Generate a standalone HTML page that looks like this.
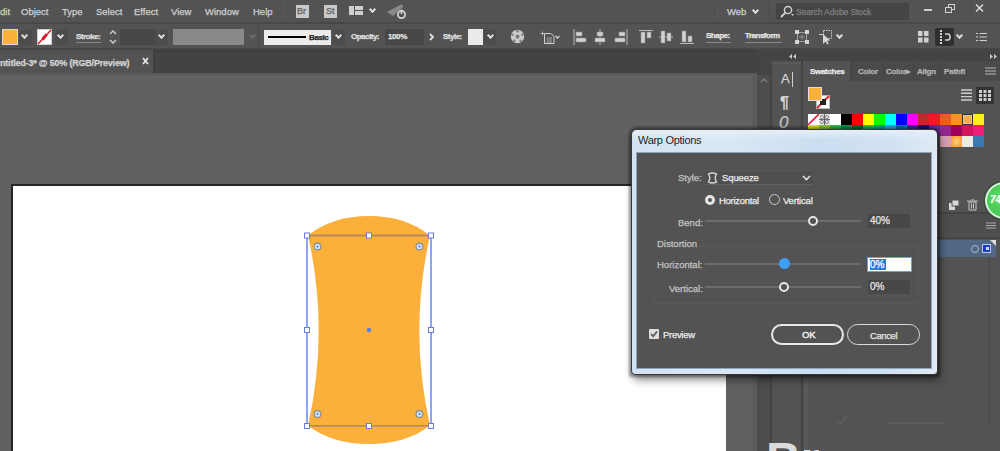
<!DOCTYPE html>
<html><head><meta charset="utf-8">
<style>
*{margin:0;padding:0;box-sizing:border-box}
html,body{width:1000px;height:451px;overflow:hidden;background:#636363;font-family:"Liberation Sans",sans-serif;position:relative}
.a{position:absolute}
.t{position:absolute;white-space:nowrap;line-height:1;-webkit-text-stroke:0.25px currentColor;}
.mt{color:#d0d0d0;font-size:9.5px;top:7px;}
.ct{color:#e0e0e0;font-size:8px;font-weight:bold;letter-spacing:-0.5px;}
.dl{font-size:9.5px;color:#c4c4c4;}
.chev{position:absolute;width:5px;height:5px;border-right:2px solid #dcdcdc;border-bottom:2px solid #dcdcdc;transform:rotate(45deg);}
</style></head><body>
<!-- bars -->
<div class="a" style="left:0;top:0;width:1000px;height:22px;background:#535353"></div>
<div class="a" style="left:0;top:22px;width:1000px;height:2px;background:#484848"></div>
<div class="a" style="left:0;top:24px;width:1000px;height:24px;background:#535353"></div>
<div class="a" style="left:0;top:48px;width:1000px;height:2px;background:#474747"></div>
<div class="a" style="left:0;top:50px;width:1000px;height:23px;background:#434343"></div>
<div class="a" style="left:154px;top:50px;width:846px;height:2px;background:#3e3e3e"></div>
<div class="a" style="left:0;top:50px;width:154px;height:23px;background:#535353"></div>
<div class="a" style="left:153px;top:50px;width:2px;height:23px;background:#3f3f3f"></div>
<div class="a" style="left:0;top:73px;width:757px;height:2px;background:#595959"></div>
<!-- canvas -->
<div class="a" style="left:0;top:75px;width:757px;height:376px;background:#616161"></div>
<div class="a" style="left:11px;top:184px;width:715px;height:267px;background:#fff;border-left:2px solid #262626;border-top:2px solid #262626"></div>


<!-- artwork -->
<svg class="a" style="left:0;top:0" width="757" height="451" viewBox="0 0 757 451">
<path d="M308 235.5 C325 222 345 216 369 216 C393 216 413 222 430 235.5 Q408.6 330.5 430 425.5 C413 438.5 393 444 369 444 C345 444 325 438.5 308 425.5 Q329.4 330.5 308 235.5 Z" fill="#fbb03b"/>
<path d="M307 233 V428 M431 233 V428" stroke="#5b7ff0" stroke-width="1.4"/><path d="M307 235.5 H431 M307 425.8 H431" stroke="#b98a5e" stroke-width="1.8"/>
<g fill="#fff" stroke="#6a7fd0" stroke-width="1">
<rect x="304.5" y="233" width="5" height="5"/><rect x="366.5" y="233" width="5" height="5"/><rect x="428.5" y="233" width="5" height="5"/>
<rect x="304.5" y="327.5" width="5" height="5"/><rect x="428.5" y="327.5" width="5" height="5"/>
<rect x="304.5" y="423.5" width="5" height="5"/><rect x="366.5" y="423.5" width="5" height="5"/><rect x="428.5" y="423.5" width="5" height="5"/>
</g>
<g fill="#d4e4f4" stroke="#808898" stroke-width="1.1">
<circle cx="317.5" cy="246.5" r="3.4"/><circle cx="419.5" cy="246.5" r="3.4"/><circle cx="317.5" cy="414" r="3.4"/><circle cx="419.5" cy="414" r="3.4"/>
</g>
<g fill="#4a80e0"><circle cx="317.5" cy="246.5" r="1.1"/><circle cx="419.5" cy="246.5" r="1.1"/><circle cx="317.5" cy="414" r="1.1"/><circle cx="419.5" cy="414" r="1.1"/></g>
<circle cx="369" cy="330" r="2.2" fill="#5b7fe0"/>
</svg>


<!-- right side -->
<div class="a" style="left:757px;top:50px;width:243px;height:401px;background:#444"></div>
<div class="a" style="left:757px;top:75px;width:13px;height:376px;background:#4d4d4d"></div>
<div class="a" style="left:752px;top:75px;width:5px;height:376px;background:#5c5c5c"></div>
<svg class="a" style="left:759px;top:76px" width="10" height="8"><path d="M2 6 L5 3 L8 6" fill="none" stroke="#7a7a7a" stroke-width="1.5"/></svg>
<div class="a" style="left:772px;top:61px;width:29px;height:390px;background:#535353"></div>
<div class="a" style="left:771px;top:63px;width:30px;height:1px;background:#5e5e5e"></div>
<span class="t" style="left:781px;top:72px;font-size:13px;color:#d4d4d4">A</span>
<div class="a" style="left:792px;top:72px;width:1px;height:15px;background:#cfcfcf"></div>
<span class="t" style="left:780px;top:95px;font-size:16px;color:#d4d4d4;font-weight:bold">&#182;</span>
<span class="t" style="left:779px;top:114px;font-size:17px;color:#c4c4c4;font-style:italic">0</span>
<svg class="a" style="left:789px;top:54px" width="8" height="5"><path d="M3 0 L0 2.5 L3 5 Z M7 0 L4 2.5 L7 5 Z" fill="#c8c8c8"/></svg>
<svg class="a" style="left:989px;top:54px" width="8" height="5"><path d="M1 0 L4 2.5 L1 5 Z M5 0 L8 2.5 L5 5 Z" fill="#c8c8c8"/></svg>
<div class="a" style="left:803px;top:61px;width:197px;height:390px;background:#535353"></div>
<div class="a" style="left:804px;top:300px;width:4px;height:151px;background:#595959"></div>
<div class="a" style="left:850px;top:61px;width:150px;height:20px;background:#4a4a4a"></div>
<div class="a" style="left:804px;top:61px;width:46px;height:20px;background:#535353"></div>
<div class="a" style="left:851px;top:63px;width:1px;height:16px;background:#424242"></div>
<div class="a" style="left:883px;top:63px;width:1px;height:16px;background:#424242"></div>
<div class="a" style="left:913px;top:63px;width:1px;height:16px;background:#424242"></div>
<div class="a" style="left:940px;top:63px;width:1px;height:16px;background:#424242"></div>
<span class="t" style="left:810px;top:68px;font-size:8px;color:#ececec;font-weight:bold;letter-spacing:-0.3px">Swatches</span>
<span class="t" style="left:858px;top:68px;font-size:8px;color:#b4b4b4;font-weight:bold;letter-spacing:-0.2px">Color</span>
<span class="t" style="left:886px;top:68px;font-size:8px;color:#b4b4b4;font-weight:bold;letter-spacing:-0.2px">Color&#9656;</span>
<span class="t" style="left:917px;top:68px;font-size:8px;color:#b4b4b4;font-weight:bold;letter-spacing:-0.2px">Align</span>
<span class="t" style="left:944px;top:68px;font-size:8px;color:#b4b4b4;font-weight:bold;letter-spacing:-0.2px">Pathfi</span>
<svg class="a" style="left:985px;top:67px" width="11" height="8"><path d="M0 1 H11 M0 4 H11 M0 7 H11" stroke="#b8b8b8" stroke-width="1.2"/></svg>
<!-- fill/stroke -->
<div class="a" style="left:816px;top:95px;width:14px;height:14px;background:#fff;border:1px solid #bbb"></div>
<svg class="a" style="left:816px;top:95px" width="14" height="14"><path d="M1 13 L13 1" stroke="#e0242c" stroke-width="2"/><rect x="4" y="4" width="6" height="6" fill="#222"/></svg>
<div class="a" style="left:808px;top:87px;width:14px;height:14px;background:#fbb03b;border:1px solid #e0e0e0"></div>
<svg class="a" style="left:961px;top:89px" width="11" height="12"><path d="M0 1 H11 M0 4.3 H11 M0 7.6 H11 M0 11 H11" stroke="#cfcfcf" stroke-width="1.4"/></svg>
<div class="a" style="left:976px;top:87px;width:18px;height:17px;background:#333"></div>
<svg class="a" style="left:979px;top:90px" width="12" height="11"><g fill="#cfcfcf"><rect x="0" y="0" width="3" height="3"/><rect x="4.5" y="0" width="3" height="3"/><rect x="9" y="0" width="3" height="3"/><rect x="0" y="4" width="3" height="3"/><rect x="4.5" y="4" width="3" height="3"/><rect x="9" y="4" width="3" height="3"/><rect x="0" y="8" width="3" height="3"/><rect x="4.5" y="8" width="3" height="3"/><rect x="9" y="8" width="3" height="3"/></g></svg>
<!-- swatches row1 -->
<div class="a" style="left:808px;top:114px;width:11px;height:11px;background:#fff"></div>
<svg class="a" style="left:808px;top:114px" width="11" height="11"><path d="M0 11 L11 0" stroke="#e0242c" stroke-width="1.6"/></svg>
<div class="a" style="left:819px;top:114px;width:11px;height:11px;background:#e6e6e6"></div><svg class="a" style="left:819px;top:114px" width="11" height="11"><path d="M5.5 0 V11 M0 5.5 H11" stroke="#666" stroke-width="1"/><circle cx="3" cy="3" r="1.6" fill="none" stroke="#777" stroke-width="0.8"/><circle cx="8" cy="3" r="1.6" fill="none" stroke="#777" stroke-width="0.8"/><circle cx="3" cy="8" r="1.6" fill="none" stroke="#777" stroke-width="0.8"/><circle cx="8" cy="8" r="1.6" fill="none" stroke="#777" stroke-width="0.8"/></svg>
<div class="a" style="left:830px;top:114px;width:11px;height:11px;background:#fff"></div>
<div class="a" style="left:841px;top:114px;width:11px;height:11px;background:#000"></div>
<div class="a" style="left:852px;top:114px;width:11px;height:11px;background:#ff0000"></div>
<div class="a" style="left:863px;top:114px;width:11px;height:11px;background:#ffff00"></div>
<div class="a" style="left:874px;top:114px;width:11px;height:11px;background:#00ff00"></div>
<div class="a" style="left:885px;top:114px;width:11px;height:11px;background:#00ffff"></div>
<div class="a" style="left:896px;top:114px;width:11px;height:11px;background:#0000ff"></div>
<div class="a" style="left:907px;top:114px;width:11px;height:11px;background:#ff00ff"></div>
<div class="a" style="left:918px;top:114px;width:11px;height:11px;background:#c1272d"></div>
<div class="a" style="left:929px;top:114px;width:11px;height:11px;background:#ed1c24"></div>
<div class="a" style="left:940px;top:114px;width:11px;height:11px;background:#f15a24"></div>
<div class="a" style="left:951px;top:114px;width:11px;height:11px;background:#f7931e"></div>
<div class="a" style="left:962px;top:114px;width:11px;height:11px;background:#fbb03b;border:1.5px solid #333;box-shadow:0 0 0 1px #ccc inset"></div>
<div class="a" style="left:973px;top:114px;width:11px;height:11px;background:#fcee21"></div>
<div class="a" style="left:808px;top:125px;width:11px;height:11px;background:#d9e021"></div><div class="a" style="left:819px;top:125px;width:11px;height:11px;background:#8cc63f"></div><div class="a" style="left:830px;top:125px;width:11px;height:11px;background:#39b54a"></div><div class="a" style="left:841px;top:125px;width:11px;height:11px;background:#009245"></div><div class="a" style="left:852px;top:125px;width:11px;height:11px;background:#006837"></div><div class="a" style="left:863px;top:125px;width:11px;height:11px;background:#22b573"></div><div class="a" style="left:874px;top:125px;width:11px;height:11px;background:#00a99d"></div><div class="a" style="left:885px;top:125px;width:11px;height:11px;background:#29abe2"></div><div class="a" style="left:896px;top:125px;width:11px;height:11px;background:#0071bc"></div><div class="a" style="left:907px;top:125px;width:11px;height:11px;background:#2e3192"></div><div class="a" style="left:918px;top:125px;width:11px;height:11px;background:#1b1464"></div><div class="a" style="left:929px;top:125px;width:11px;height:11px;background:#662d91"></div>
<div class="a" style="left:940px;top:125px;width:11px;height:11px;background:#93278f"></div>
<div class="a" style="left:951px;top:125px;width:11px;height:11px;background:#9e005d"></div>
<div class="a" style="left:962px;top:125px;width:11px;height:11px;background:#d4145a"></div>
<div class="a" style="left:973px;top:125px;width:11px;height:11px;background:#ed1e79"></div>
<div class="a" style="left:940px;top:136px;width:11px;height:11px;background:#d9a0b0"></div>
<div class="a" style="left:951px;top:136px;width:11px;height:11px;background:radial-gradient(#ffd080,#f7931e)"></div>
<div class="a" style="left:962px;top:136px;width:11px;height:11px;background:#ecebe6"></div>
<div class="a" style="left:973px;top:136px;width:11px;height:11px;background:#3a7ab0"></div>
<!-- lower panel -->
<div class="a" style="left:803px;top:212px;width:197px;height:2px;background:#444"></div>
<div class="a" style="left:803px;top:214px;width:197px;height:23px;background:#4e4e4e"></div>
<svg class="a" style="left:949px;top:200px" width="10" height="10"><rect x="0" y="3" width="6" height="7" fill="#d8d8d8"/><rect x="3" y="0" width="7" height="6" fill="#d8d8d8" stroke="#535353"/></svg>
<svg class="a" style="left:967px;top:199px" width="11" height="12"><path d="M0 2 H11 M4 0 H7" stroke="#c8c8c8" stroke-width="1.2"/><path d="M2 3 H9 V11 H2 Z M4.5 4.5 V9.5 M6.5 4.5 V9.5" fill="none" stroke="#c8c8c8" stroke-width="1"/></svg>
<svg class="a" style="left:986px;top:222px" width="10" height="7"><path d="M0 1 H10 M0 3.5 H10 M0 6 H10" stroke="#aaa" stroke-width="1.1"/></svg>
<div class="a" style="left:803px;top:237px;width:197px;height:2px;background:#444"></div>
<div class="a" style="left:803px;top:240px;width:193px;height:17px;background:#526785"></div>
<div class="a" style="left:971px;top:245px;width:8px;height:8px;border:1.5px solid #a8b8cc;border-radius:50%"></div>
<div class="a" style="left:982px;top:244px;width:9px;height:9px;background:#1c3fbf;border:1px solid #c0c8e0"></div>
<div class="a" style="left:986px;top:247px;width:3px;height:3px;background:#cfd8ff"></div>
<svg class="a" style="left:990px;top:240px" width="6" height="6"><path d="M0 0 H6 V6 Z" fill="#ddd"/></svg>
<!-- green badge -->
<div class="a" style="left:985px;top:182px;width:38px;height:37px;border-radius:50%;background:radial-gradient(circle at 40% 40%,#5ad864,#3cc048);border:2px solid #d8f4dc;box-shadow:0 0 0 1.5px #3a4a3a"></div>
<span class="t" style="left:990px;top:195px;font-size:10px;color:#f4fff4;font-weight:bold;font-style:italic">74</span>
<!-- bottom watermark -->
<span class="t" style="left:766px;top:436px;font-size:48px;color:#dadada;font-weight:bold;-webkit-text-stroke:0">Br</span>
<div class="a" style="left:887px;top:422px;width:58px;height:2px;background:#5c5c5c"></div>
<div class="a" style="left:988px;top:258px;width:2px;height:165px;background:#4b4b4b"></div>
<svg class="a" style="left:836px;top:415px" width="12" height="10"><path d="M1 7 L4 9 L11 1" fill="none" stroke="#626262" stroke-width="1.3"/></svg>


<!-- dialog -->
<div class="a" style="left:629px;top:127px;width:311px;height:250px;border-radius:8px 8px 3px 3px;background:rgba(0,0,0,0.35);filter:blur(1px)"></div>
<div class="a" style="left:631px;top:129px;width:307px;height:246px;border-radius:6px 6px 4px 4px;box-shadow:2px 5px 9px rgba(0,0,0,0.45);background:linear-gradient(90deg,#d2e3f3 0%,#d9e8f5 30%,#cbdef1 60%,#d0e1f2 85%,#e0eaf5 100%);border:1px solid #3a3a3a"></div>
<div class="a" style="left:632px;top:130px;width:305px;height:10px;border-radius:5px 5px 0 0;background:linear-gradient(#e6eff8,rgba(230,239,248,0))"></div>
<div class="a" style="left:636px;top:152px;width:296px;height:217px;background:#535353;border:1px solid #8ea6c0"></div>
<span class="t" style="left:638px;top:135px;font-size:11px;color:#1e1e1e;letter-spacing:-0.3px;-webkit-text-stroke:0">Warp Options</span>
<span class="t dl" style="left:678px;top:173px">Style:</span>
<div class="a" style="left:705px;top:172px;width:107px;height:13px;background:#4f4f4f;border-top:1px solid #4a4a4a;border-bottom:1px solid #606060"></div>
<svg class="a" style="left:707px;top:172px" width="11" height="12" viewBox="0 0 11 12"><path d="M1.5 2 Q5.5 0 9.5 2 Q7 6 9.5 10 Q5.5 12 1.5 10 Q4 6 1.5 2 Z" fill="none" stroke="#d4d4d4" stroke-width="1.4"/></svg>
<span class="t" style="left:722px;top:173px;font-size:9.5px;color:#ececec;letter-spacing:-0.1px">Squeeze</span>
<svg class="a" style="left:802px;top:175px" width="9" height="6"><path d="M1 1 L4.5 4.5 L8 1" fill="none" stroke="#e0e0e0" stroke-width="1.6"/></svg>
<div class="a" style="left:705px;top:195px;width:10px;height:10px;border-radius:50%;background:#e6e6e6"></div>
<div class="a" style="left:708px;top:198px;width:4px;height:4px;border-radius:50%;background:#555"></div>
<span class="t" style="left:719px;top:195.5px;font-size:9.5px;color:#ececec;letter-spacing:-0.3px">Horizontal</span>
<div class="a" style="left:769px;top:194px;width:11px;height:11px;border-radius:50%;border:1.2px solid #cfcfcf"></div>
<span class="t" style="left:783px;top:195.5px;font-size:9.5px;color:#ececec;letter-spacing:-0.2px">Vertical</span>
<span class="t dl" style="left:678px;top:217.5px">Bend:</span>
<div class="a" style="left:705px;top:220px;width:156px;height:2px;background:#6c6c6c"></div>
<div class="a" style="left:807.5px;top:216px;width:10px;height:10px;border-radius:50%;border:2px solid #e6e6e6;background:#535353"></div>
<div class="a" style="left:868px;top:214px;width:42px;height:14px;background:#474747"></div>
<span class="t" style="left:870px;top:216px;font-size:10px;color:#e6e6e6">40%</span>
<div class="a" style="left:653px;top:246px;width:266px;height:58px;border:1px solid #595959"></div>
<span class="t dl" style="left:657px;top:239px;background:#535353">Distortion</span>
<span class="t dl" style="left:657px;top:260px">Horizontal:</span>
<div class="a" style="left:705px;top:263px;width:156px;height:2px;background:#6c6c6c"></div>
<div class="a" style="left:778.5px;top:258px;width:11px;height:11px;border-radius:50%;background:#3e9ff5"></div>
<div class="a" style="left:867px;top:257px;width:45px;height:15px;background:#fff;border:1px solid #6b9fe0"></div>
<div class="a" style="left:870px;top:259px;width:16px;height:11px;background:#3377d6"></div>
<span class="t" style="left:870px;top:260px;font-size:10px;color:#fff">0%</span>
<span class="t dl" style="left:669px;top:283.5px">Vertical:</span>
<div class="a" style="left:705px;top:286px;width:156px;height:2px;background:#6c6c6c"></div>
<div class="a" style="left:779px;top:282px;width:10px;height:10px;border-radius:50%;border:2px solid #e6e6e6;background:#535353"></div>
<div class="a" style="left:868px;top:280px;width:42px;height:14px;background:#474747"></div>
<span class="t" style="left:870px;top:282px;font-size:10px;color:#e6e6e6">0%</span>
<div class="a" style="left:649px;top:329px;width:10px;height:10px;background:#dcdcdc;border-radius:1px"></div>
<svg class="a" style="left:649px;top:329px" width="10" height="10"><path d="M2 5 L4.2 7.3 L8 2.5" fill="none" stroke="#555" stroke-width="1.6"/></svg>
<span class="t" style="left:663px;top:329.5px;font-size:9.5px;color:#ececec;letter-spacing:-0.3px">Preview</span>
<div class="a" style="left:771px;top:324px;width:73px;height:21px;border-radius:11px;border:2px solid #e8e8e8"></div>
<span class="t" style="left:802px;top:330px;font-size:9.5px;color:#f0f0f0;letter-spacing:-0.2px;-webkit-text-stroke:0.4px #f0f0f0">OK</span>
<div class="a" style="left:847px;top:324px;width:73px;height:21px;border-radius:11px;border:1.6px solid #dadada"></div>
<span class="t" style="left:870px;top:330.5px;font-size:9.5px;color:#e6e6e6;letter-spacing:-0.4px">Cancel</span>

<div class="a" style="left:283px;top:3px;width:1px;height:16px;background:#5c5c5c"></div>
<div class="a" style="left:717px;top:3px;width:1px;height:16px;background:#5c5c5c"></div>
<div class="a" style="left:768px;top:3px;width:1px;height:16px;background:#4c4c4c"></div>
<!-- menu text -->
<span class="t mt" style="left:0">dit</span>
<span class="t mt" style="left:21px">Object</span>
<span class="t mt" style="left:62px">Type</span>
<span class="t mt" style="left:96px">Select</span>
<span class="t mt" style="left:134px">Effect</span>
<span class="t mt" style="left:171px">View</span>
<span class="t mt" style="left:205px">Window</span>
<span class="t mt" style="left:253px">Help</span>

<!-- tab text -->
<span class="t" style="left:0;top:59px;color:#d4d4d4;font-size:9px;font-weight:bold;letter-spacing:-0.2px">ntitled-3* @ 50% (RGB/Preview)</span>
<svg class="a" style="left:142px;top:57px" width="7" height="8"><path d="M1 1 L6 7 M6 1 L1 7" stroke="#e8e8e8" stroke-width="1.8"/></svg>


<!-- menu icons -->
<div class="a" style="left:296px;top:5px;width:13px;height:13px;background:#c9c9c9"></div>
<span class="t" style="left:297px;top:7px;font-size:9px;color:#606060">Br</span>
<div class="a" style="left:324px;top:5px;width:13px;height:13px;background:#c9c9c9"></div>
<span class="t" style="left:326px;top:7px;font-size:9px;color:#606060">St</span>
<div class="a" style="left:349px;top:6px;width:5px;height:9px;background:#d0d0d0"></div>
<div class="a" style="left:355px;top:6px;width:8px;height:4px;background:#d0d0d0"></div>
<div class="a" style="left:355px;top:11px;width:8px;height:4px;background:#d0d0d0"></div>
<div class="chev" style="left:370px;top:7px;width:5px;height:5px"></div>
<svg class="a" style="left:386px;top:3px" width="22" height="17" viewBox="0 0 22 17"><path d="M1 9 L16 1 L17 4 L7 13 Z" fill="#888"/><circle cx="15.5" cy="11.5" r="3.6" fill="none" stroke="#d4d4d4" stroke-width="1.7"/><path d="M15.5 6.5 V11" stroke="#d4d4d4" stroke-width="1.7"/></svg>

<span class="t mt" style="left:727px">Web</span>
<div class="chev" style="left:753px;top:8px;width:5px;height:5px"></div>
<div class="a" style="left:776px;top:3px;width:133px;height:17px;background:#454545;border-radius:2px"></div>
<svg class="a" style="left:779px;top:4px" width="16" height="14" viewBox="0 0 16 14"><circle cx="9" cy="6" r="3.6" fill="none" stroke="#d0d0d0" stroke-width="1.5"/><path d="M6.5 8.5 L2 13" stroke="#d0d0d0" stroke-width="1.8"/><path d="M12 10 L15 10 L13.5 12 Z" fill="#d0d0d0"/></svg>
<span class="t" style="left:796px;top:8px;font-size:8.5px;color:#808080;letter-spacing:-0.1px">Search Adobe Stock</span>
<div class="a" style="left:924px;top:9px;width:8px;height:2px;background:#d0d0d0"></div>
<div class="a" style="left:948px;top:4px;width:7px;height:6px;border:1px solid #d0d0d0"></div>
<div class="a" style="left:945px;top:7px;width:7px;height:6px;border:1px solid #d0d0d0;background:#535353"></div>
<svg class="a" style="left:975px;top:4px" width="9" height="8" viewBox="0 0 9 8"><path d="M1 0.5 L8 7.5 M8 0.5 L1 7.5" stroke="#d8d8d8" stroke-width="1.5"/></svg>

<!-- control bar -->
<div class="a" style="left:19px;top:30px;width:13px;height:15px;background:#4c4c4c"></div><div class="a" style="left:55px;top:30px;width:13px;height:15px;background:#4c4c4c"></div><div class="a" style="left:155px;top:30px;width:13px;height:15px;background:#4c4c4c"></div><div class="a" style="left:333px;top:30px;width:12px;height:15px;background:#4c4c4c"></div><div class="a" style="left:484px;top:30px;width:12px;height:15px;background:#4c4c4c"></div>
<div class="a" style="left:2px;top:29px;width:16px;height:16px;background:#fbb03b;border:1px solid #d9d9d9"></div>
<div class="chev" style="left:22px;top:33px;width:5px;height:5px"></div>
<div class="a" style="left:37px;top:29px;width:15px;height:16px;background:#fff;border:1px solid #cfcfcf"></div>
<svg class="a" style="left:37px;top:29px" width="15" height="16"><path d="M1 15 L14 1" stroke="#d8202a" stroke-width="1.6"/><path d="M5.5 10.5 L9.5 5.5" stroke="#d8202a" stroke-width="3"/></svg>
<div class="chev" style="left:58px;top:33px;width:5px;height:5px"></div>
<span class="t ct" style="left:76px;top:33px">Stroke:</span>
<div class="a" style="left:76px;top:42px;width:25px;height:1px;border-top:1px solid #888"></div>
<svg class="a" style="left:107px;top:28px" width="12" height="18" viewBox="0 0 12 18"><path d="M3 6 L6 3 L9 6 M3 12 L6 15 L9 12" fill="none" stroke="#d0d0d0" stroke-width="1.4"/></svg>
<div class="a" style="left:120px;top:29px;width:35px;height:16px;background:#474747"></div>
<div class="chev" style="left:159px;top:33px;width:5px;height:5px"></div>
<div class="a" style="left:173px;top:29px;width:71px;height:16px;background:#898989"></div>
<div class="a" style="left:264px;top:30px;width:67px;height:15px;background:#ebebeb"></div>
<div class="a" style="left:268px;top:36px;width:38px;height:2px;background:#000"></div>
<span class="t" style="left:309px;top:34px;font-size:8px;font-weight:bold;letter-spacing:-0.4px;color:#222">Basic</span>
<div class="chev" style="left:250px;top:33px;border-color:#6a6a6a"></div>
<div class="a" style="left:258px;top:27px;width:1px;height:20px;background:#474747"></div>
<div class="chev" style="left:336px;top:33px;width:5px;height:5px"></div>
<span class="t ct" style="left:351px;top:33px">Opacity:</span>
<div class="a" style="left:385px;top:29px;width:39px;height:16px;background:#474747"></div>
<span class="t" style="left:388px;top:33px;font-size:8px;font-weight:bold;letter-spacing:-0.4px;color:#e6e6e6">100%</span>
<svg class="a" style="left:429px;top:33px" width="6" height="8"><path d="M1 1 L4 4 L1 7" fill="none" stroke="#e0e0e0" stroke-width="1.8"/></svg>
<span class="t ct" style="left:443px;top:33px">Style:</span>
<div class="a" style="left:468px;top:29px;width:15px;height:16px;background:#ebebeb"></div>
<div class="chev" style="left:488px;top:33px;width:5px;height:5px"></div>
<svg class="a" style="left:510px;top:29px" width="15" height="15" viewBox="0 0 15 15"><circle cx="7.5" cy="7.5" r="6.7" fill="#cdcdcd"/><g fill="#7c7c7c"><path d="M7.5 5.2 L9.7 6.8 L8.9 9.4 H6.1 L5.3 6.8 Z"/><circle cx="7.5" cy="2.2" r="1.3"/><circle cx="12.5" cy="5.8" r="1.3"/><circle cx="10.6" cy="11.8" r="1.3"/><circle cx="4.4" cy="11.8" r="1.3"/><circle cx="2.5" cy="5.8" r="1.3"/></g></svg>
<svg class="a" style="left:540px;top:30px" width="22" height="15" viewBox="0 0 22 15"><path d="M0.5 3.5 H4.5 M2.5 1.5 V5.5" stroke="#bdbdbd" stroke-width="0.9"/><path d="M4.5 3.5 H11 L14 6.5 V13.5 H4.5 Z" fill="none" stroke="#cfcfcf" stroke-width="1"/><path d="M6.5 8 H12 M6.5 10 H12 M6.5 12 H12" stroke="#bcbcbc" stroke-width="0.8"/><path d="M15.5 6 L17.5 8 L19.5 6" fill="none" stroke="#cfcfcf" stroke-width="1.3"/></svg>
<!-- align icons -->
<svg class="a" style="left:573px;top:29px" width="14" height="16" viewBox="0 0 14 16"><path d="M1 0 V16" stroke="#b8b8b8" stroke-width="1"/><rect x="3" y="3" width="6" height="4" fill="#d2d2d2" stroke="#8a8a8a" stroke-width="0.6"/><rect x="3" y="9" width="10" height="4" fill="#d2d2d2" stroke="#8a8a8a" stroke-width="0.6"/></svg>
<svg class="a" style="left:593px;top:29px" width="14" height="16" viewBox="0 0 14 16"><path d="M7 0 V16" stroke="#b8b8b8" stroke-width="1"/><rect x="4" y="3" width="6" height="4" fill="#d2d2d2" stroke="#8a8a8a" stroke-width="0.6"/><rect x="2" y="9" width="10" height="4" fill="#d2d2d2" stroke="#8a8a8a" stroke-width="0.6"/></svg>
<svg class="a" style="left:614px;top:29px" width="14" height="16" viewBox="0 0 14 16"><path d="M13 0 V16" stroke="#b8b8b8" stroke-width="1"/><rect x="5" y="3" width="6" height="4" fill="#d2d2d2" stroke="#8a8a8a" stroke-width="0.6"/><rect x="1" y="9" width="10" height="4" fill="#d2d2d2" stroke="#8a8a8a" stroke-width="0.6"/></svg>
<svg class="a" style="left:639px;top:29px" width="14" height="16" viewBox="0 0 14 16"><path d="M0 1.5 H14" stroke="#b8b8b8" stroke-width="1"/><rect x="2" y="3" width="4" height="11" fill="#d2d2d2" stroke="#8a8a8a" stroke-width="0.6"/><rect x="8" y="3" width="4" height="6" fill="#d2d2d2" stroke="#8a8a8a" stroke-width="0.6"/></svg>
<svg class="a" style="left:659px;top:29px" width="14" height="16" viewBox="0 0 14 16"><path d="M0 8 H14" stroke="#b8b8b8" stroke-width="1"/><rect x="2" y="2" width="4" height="12" fill="#d2d2d2" stroke="#8a8a8a" stroke-width="0.6"/><rect x="8" y="4" width="4" height="8" fill="#d2d2d2" stroke="#8a8a8a" stroke-width="0.6"/></svg>
<svg class="a" style="left:680px;top:29px" width="14" height="16" viewBox="0 0 14 16"><path d="M0 14.5 H14" stroke="#b8b8b8" stroke-width="1"/><rect x="2" y="2" width="4" height="11" fill="#d2d2d2" stroke="#8a8a8a" stroke-width="0.6"/><rect x="8" y="7" width="4" height="6" fill="#d2d2d2" stroke="#8a8a8a" stroke-width="0.6"/></svg>
<span class="t ct" style="left:706px;top:32px;font-weight:bold;color:#e8e8e8">Shape:</span>
<div class="a" style="left:706px;top:42px;width:25px;height:1px;border-top:1px solid #888"></div>
<span class="t ct" style="left:745px;top:32px;font-weight:bold;color:#e8e8e8">Transform</span>
<div class="a" style="left:745px;top:42px;width:37px;height:1px;border-top:1px solid #888"></div>
<svg class="a" style="left:795px;top:30px" width="14" height="14" viewBox="0 0 14 14"><rect x="2.5" y="2.5" width="9" height="9" fill="none" stroke="#a8a8a8" stroke-width="0.9"/><path d="M4 7 H10 M7 4 V10" stroke="#9a9a9a" stroke-width="0.8"/><g fill="#d4d4d4"><rect x="0" y="0" width="4" height="4"/><rect x="10" y="0" width="4" height="4"/><rect x="0" y="10" width="4" height="4"/><rect x="10" y="10" width="4" height="4"/></g></svg>
<svg class="a" style="left:819px;top:29px" width="14" height="16" viewBox="0 0 14 16"><rect x="4.5" y="1.5" width="8" height="8" fill="none" stroke="#cfcfcf" stroke-width="1" stroke-dasharray="1.5 1"/><path d="M0 5.5 H4" stroke="#cfcfcf" stroke-width="1"/><path d="M4 5 V15 L6.5 12.5 L8.5 15.5 L9.8 14.8 L8 11.8 L11 11.5 Z" fill="#d8d8d8"/></svg>
<div class="chev" style="left:837px;top:33px;width:5px;height:5px"></div>
<svg class="a" style="left:918px;top:31px" width="11" height="12" viewBox="0 0 11 12"><g fill="#d0d0d0"><rect x="0" y="0" width="4.5" height="5"/><rect x="6" y="0" width="4.5" height="5"/><rect x="0" y="6.5" width="4.5" height="5"/><rect x="6" y="6.5" width="4.5" height="5"/></g></svg>
<div class="a" style="left:935px;top:28px;width:19px;height:18px;background:#2f2f2f;border-radius:2px"></div>
<svg class="a" style="left:938px;top:30px" width="14" height="14" viewBox="0 0 14 14"><path d="M3 0 V14" stroke="#d6d6d6" stroke-width="2" stroke-dasharray="2 1"/><path d="M7 4 H10 Q12 4 12 7 Q12 10 10 10 H7" fill="none" stroke="#d6d6d6" stroke-width="1.5"/></svg>
<div class="chev" style="left:957px;top:33px;width:5px;height:5px"></div>
<svg class="a" style="left:976px;top:32px" width="12" height="10" viewBox="0 0 12 10"><path d="M0 1.5 H2 M3.5 1.5 H11 M0 5 H2 M3.5 5 H11 M0 8.5 H2 M3.5 8.5 H11" stroke="#cfcfcf" stroke-width="1.2"/></svg>

</body></html>
